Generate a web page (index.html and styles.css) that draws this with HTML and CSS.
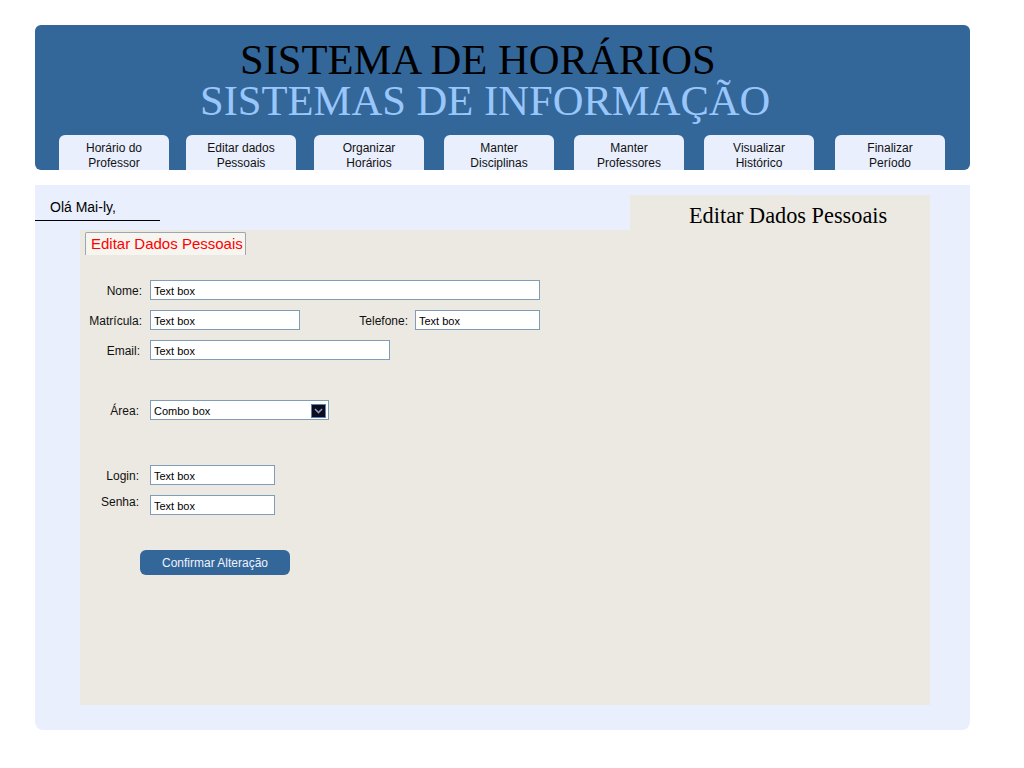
FILE: index.html
```html
<!DOCTYPE html>
<html lang="pt-BR">
<head>
<meta charset="utf-8">
<title>Sistema de Horários</title>
<link rel="stylesheet" href="styles.css">
</head>
<body>
<div class="page">
  <header class="header">
    <div class="title-main">SISTEMA DE HORÁRIOS</div>
    <div class="title-sub">SISTEMAS DE INFORMAÇÃO</div>
    <nav class="tabs">
      <a class="tab tab-a">Horário do<br>Professor</a>
      <a class="tab tab-b">Editar dados<br>Pessoais</a>
      <a class="tab">Organizar<br>Horários</a>
      <a class="tab">Manter<br>Disciplinas</a>
      <a class="tab">Manter<br>Professores</a>
      <a class="tab">Visualizar<br>Histórico</a>
      <a class="tab tab-c">Finalizar<br>Período</a>
    </nav>
  </header>

  <main class="panel">
    <div class="top-row">
      <div class="greeting">Olá Mai-ly,</div>
      <div class="page-heading">Editar Dados Pessoais</div>
    </div>
    <section class="content">
      <div class="content-tab">Editar Dados Pessoais</div>
      <form class="form">
        <div class="row">
          <label class="lbl">Nome:</label>
          <input class="box w-390" type="text" value="Text box">
        </div>
        <div class="row">
          <label class="lbl">Matrícula:</label>
          <input class="box w-150" type="text" value="Text box">
          <label class="lbl lbl-tel">Telefone:</label>
          <input class="box w-125" type="text" value="Text box">
        </div>
        <div class="row">
          <label class="lbl lbl-shift">Email:</label>
          <input class="box w-240" type="text" value="Text box">
        </div>
        <div class="row gap-40">
          <label class="lbl lbl-shift2">Área:</label>
          <div class="combo">
            <span class="combo-text">Combo box</span>
            <span class="combo-btn">
              <svg width="9" height="6" viewBox="0 0 9 6"><path d="M1 1 L4.5 4.5 L8 1" fill="none" stroke="#8a9cbf" stroke-width="1.6"/></svg>
            </span>
          </div>
        </div>
        <div class="row gap-45">
          <label class="lbl lbl-shift2">Login:</label>
          <input class="box w-125" type="text" value="Text box">
        </div>
        <div class="row row-top">
          <label class="lbl lbl-shift2 lbl-top">Senha:</label>
          <input class="box w-125" type="text" value="Text box">
        </div>
        <button class="confirm" type="button">Confirmar Alteração</button>
      </form>
    </section>
  </main>
</div>
</body>
</html>
```

FILE: styles.css
```css
* { box-sizing: border-box; }

html, body {
  margin: 0;
  padding: 0;
  background: #ffffff;
}

body {
  font-family: "Liberation Sans", Arial, sans-serif;
  color: #111;
}

.page {
  width: 935px;
  margin: 25px 0 0 35px;
}

/* Header */
.header {
  background: #336699;
  border-radius: 6px;
  height: 145px;
  padding-top: 14px;
  display: flex;
  flex-direction: column;
}

.title-main,
.title-sub {
  font-family: "Liberation Serif", "Times New Roman", serif;
  font-size: 42.6px;
  line-height: 41px;
  white-space: nowrap;
}

.title-main {
  color: #000000;
  padding-left: 205px;
}

.title-sub {
  color: #99c6fb;
  padding-left: 165px;
}

.tabs {
  margin-top: auto;
  display: flex;
  gap: 20px;
  padding-left: 24px;
}

.tab-a { margin-right: -3px; }
.tab-b { margin-right: -2px; }
.tab-c { margin-left: 1px; }

.tab {
  width: 110px;
  height: 35px;
  background: #e9effd;
  border-radius: 6px 6px 0 0;
  padding-top: 6px;
  text-align: center;
  font-size: 12px;
  line-height: 15px;
  color: #111;
}

/* Panel */
.panel {
  margin-top: 15px;
  height: 545px;
  background: #e9effd;
  border-radius: 0 0 8px 8px;
  padding: 10px 40px 25px 0;
}

.top-row {
  display: flex;
  justify-content: space-between;
  align-items: flex-start;
  height: 35px;
}

.greeting {
  width: 125px;
  padding: 4px 0 5px 15px;
  font-size: 14px;
  line-height: 16px;
  border-bottom: 1px solid #000;
  color: #000;
}

.page-heading {
  width: 300px;
  height: 35px;
  background: #ece9e2;
  padding: 6px 0 0 59px;
  font-family: "Liberation Serif", "Times New Roman", serif;
  font-size: 22.3px;
  line-height: 29px;
  color: #000;
  white-space: nowrap;
}

.content {
  margin-left: 45px;
  width: 850px;
  height: 475px;
  background: #ece9e2;
  padding-top: 2px;
}

.content-tab {
  display: inline-block;
  margin-left: 5px;
  height: 23px;
  padding: 0 2px 0 5px;
  background: #f6f5f0;
  border: 1px solid #9ea7b0;
  border-bottom: none;
  border-radius: 2px 2px 0 0;
  color: #ff0000;
  font-size: 15px;
  line-height: 22px;
}

/* Form */
.form {
  margin-top: 25px;
  display: flex;
  flex-direction: column;
  gap: 10px;
}

.row {
  display: flex;
  align-items: center;
  gap: 8px;
  height: 20px;
}

.gap-40 { margin-top: 30px; }
.gap-45 { margin-top: 35px; }

.lbl {
  width: 62px;
  text-align: right;
  font-size: 12px;
  line-height: 14px;
  color: #111;
  padding-top: 1px;
}

.lbl-shift { padding-right: 2px; }
.lbl-shift2 { padding-right: 3px; }

.lbl-top {
  align-self: flex-start;
  padding-top: 0;
}

.lbl-tel {
  width: 100px;
  margin-right: -1px;
}

.box {
  height: 20px;
  border: 1px solid #7f9db9;
  background: #ffffff;
  padding: 1px 3px 0 3px;
  margin: 0;
  font-family: "Liberation Sans", Arial, sans-serif;
  font-size: 11px;
  color: #000;
  outline: none;
}

.w-390 { width: 390px; }
.w-240 { width: 240px; }
.w-150 { width: 150px; }
.w-125 { width: 125px; }

.combo {
  width: 179px;
  height: 20px;
  border: 1px solid #7f9db9;
  background: #ffffff;
  display: flex;
  align-items: center;
  justify-content: space-between;
  padding: 0 2px 0 3px;
  font-size: 11px;
  color: #000;
}

.combo-text {
  padding-top: 1px;
}

.combo-btn {
  width: 15px;
  height: 14px;
  background: #0c0c1c;
  border: 1px solid #5f7fae;
  display: flex;
  align-items: center;
  justify-content: center;
  margin-top: 1px;
}

.combo-btn svg { display: block; }

.confirm {
  margin-top: 25px;
  margin-left: 60px;
  width: 150px;
  height: 25px;
  border: none;
  border-radius: 6px;
  background: #336699;
  color: #eef3fd;
  font-family: "Liberation Sans", Arial, sans-serif;
  font-size: 12px;
  padding: 0;
  align-self: flex-start;
}
```
